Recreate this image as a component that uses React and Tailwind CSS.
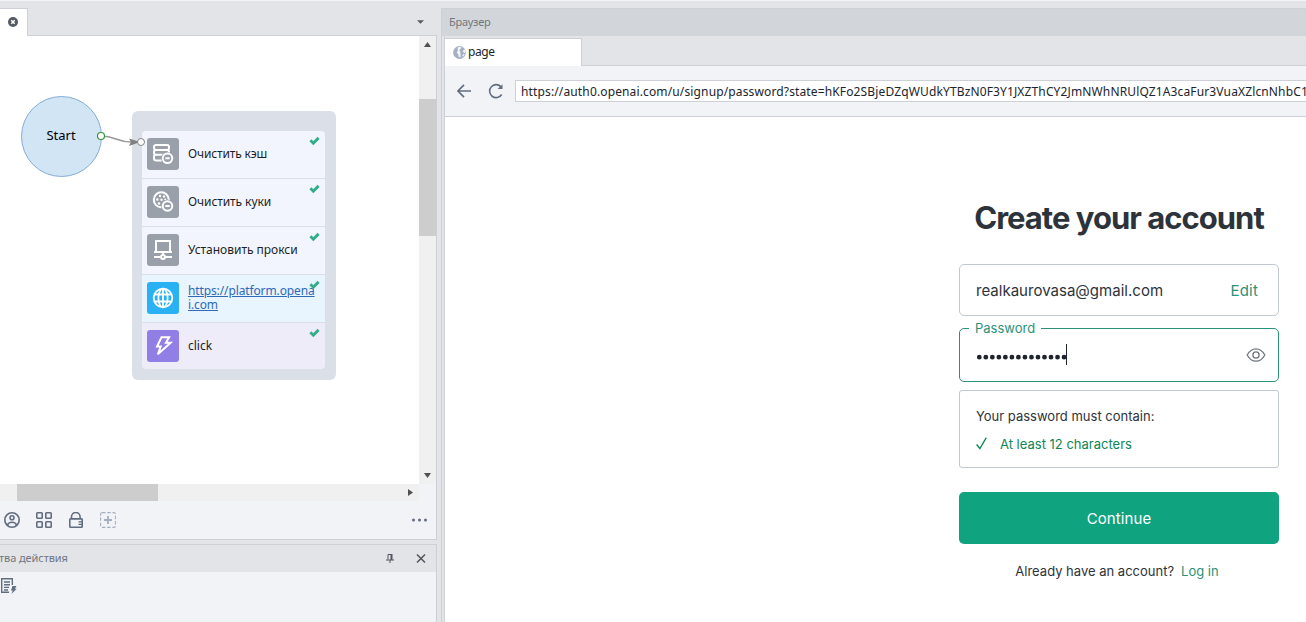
import React from "react";

const ui = "font-['Noto_Sans',sans-serif]";

function CacheIcon() {
  return (
    <svg width="32" height="32" viewBox="0 0 32 32" fill="none" stroke="#fff" strokeWidth="2">
      <path d="M15 22.500H9a2 2 0 0 1-2-2v-1.700a2 2 0 0 1 2-2h12M7 9a2 2 0 0 1 2-2h11a2 2 0 0 1 2 2v1a2 2 0 0 1-2 2H9a2 2 0 0 1-2-2zM9 12a2 2 0 0 0-2 2v.8a2 2 0 0 0 2 2h11a2 2 0 0 0 2-2V14a2 2 0 0 0-2-2" />
      <circle cx="20.500" cy="20.300" r="6.400" fill="#9aa0aa" stroke="none" />
      <circle cx="20.500" cy="20.300" r="4.800" />
      <path d="M18.300 20.300h4.400" />
    </svg>
  );
}

function CookieIcon() {
  return (
    <svg width="32" height="32" viewBox="0 0 32 32" fill="none" stroke="#fff" strokeWidth="2">
      <circle cx="14.300" cy="13.800" r="7.500" />
      <g fill="#fff" stroke="none">
        <circle cx="13" cy="10" r="1.200" /><circle cx="17" cy="10.500" r="1.200" />
        <circle cx="10.300" cy="13.500" r="1.200" /><circle cx="14.500" cy="13.800" r="1.200" />
        <circle cx="12" cy="17.500" r="1.200" /><circle cx="18.300" cy="13.500" r="1.100" />
      </g>
      <circle cx="20.500" cy="20" r="6.400" fill="#9aa0aa" stroke="none" />
      <circle cx="20.500" cy="20" r="4.800" />
      <path d="M18.300 20h4.400" />
    </svg>
  );
}

function ProxyIcon() {
  return (
    <svg width="32" height="32" viewBox="0 0 32 32" fill="none" stroke="#fff" strokeWidth="2">
      <path d="M9 17.500V7h14v10.500M7 18h18M16 18v3M7 23h6M19 23h6" />
      <circle cx="16" cy="23" r="2" fill="#9aa0aa" />
    </svg>
  );
}

function GlobeIcon() {
  return (
    <svg width="32" height="32" viewBox="0 0 32 32" fill="none" stroke="#fff" strokeWidth="1.8">
      <circle cx="16" cy="16" r="9.300" />
      <ellipse cx="16" cy="16" rx="4.600" ry="9.300" />
      <path d="M16 6.700v18.600M8 12.500h16M8 19.500h16" />
    </svg>
  );
}

function BoltIcon() {
  return (
    <svg width="32" height="32" viewBox="0 0 32 32" fill="none" stroke="#fff" strokeWidth="2">
      <path d="M14.500 7.200h7.600l-3.200 5.600h4.700L10.800 24.300l2.900-7.800H10z" />
    </svg>
  );
}

function Done() {
  return (
    <svg className="absolute right-[5.500px] top-[5px]" width="11" height="10" viewBox="0 0 11 10" fill="none" stroke="#34ad88" strokeWidth="2.900">
      <path d="M1.400 4.300l2.900 2.900L9.600 1.900" />
    </svg>
  );
}

function Step({ icon, tile, bg, last, children }) {
  return (
    <div className={"relative flex items-center pl-[5px] " + bg + (last ? " h-[46px]" : " h-12 border-b border-[#d9dee7] pb-px")}>
      <div className={"size-8 shrink-0 rounded-[3px] " + tile}>{icon}</div>
      <div className="ml-[9px] w-32 text-[12px] leading-[14px]">{children}</div>
      <Done />
    </div>
  );
}

function Flow() {
  return (
    <div className="relative h-[448px] w-[419px] overflow-hidden bg-white text-[#1c1f26]">
      <div className="absolute left-[21px] top-[60px] flex size-[81px] items-center justify-center rounded-full border border-[#85acd6] bg-[#d1e5f4] pb-px pr-px text-[13px] text-black">
        Start
      </div>
      <div className="absolute left-[132px] top-[75px] h-[269px] w-[204px] rounded-md bg-[#dbe0e8] px-2.5 pt-5">
        <div className="w-[183px] overflow-hidden rounded-[4px]">
          <Step icon={<CacheIcon />} tile="bg-[#9aa0aa]" bg="bg-[#f2f5fd]"><span className="tracking-[-0.15px]">Очистить кэш</span></Step>
          <Step icon={<CookieIcon />} tile="bg-[#9aa0aa]" bg="bg-[#f2f5fd]"><span className="tracking-[-0.08px]">Очистить куки</span></Step>
          <Step icon={<ProxyIcon />} tile="bg-[#9aa0aa]" bg="bg-[#f2f5fd]"><span className="tracking-[-0.02px]">Установить прокси</span></Step>
          <Step icon={<GlobeIcon />} tile="bg-[#29b1f3]" bg="bg-[#e8f4fe]">
            <span className="tracking-[-0.12px] text-[#3069b8] underline">https://platform.opena<br />i.com</span>
          </Step>
          <Step icon={<BoltIcon />} tile="bg-[#917fe5]" bg="bg-[#efecfa]" last>click</Step>
        </div>
      </div>
      <svg className="absolute left-[95px] top-[94px]" width="52" height="20" viewBox="0 0 52 20" fill="none">
        <path d="M6 6C21 6 21 12 37 12" stroke="#999" strokeWidth="1.500" />
        <path d="M34 8.500L45 12l-11 4 2-4z" fill="#7f7f7f" />
        <circle cx="6" cy="6" r="3.500" fill="#fff" stroke="#389338" strokeWidth="1.200" />
        <circle cx="46" cy="12" r="3.500" fill="#fff" stroke="#858585" />
      </svg>
    </div>
  );
}

function LeftToolbar() {
  return (
    <div className="flex h-[38px] items-center bg-[#f2f3f7] pl-1 text-[#626d80]">
      <svg width="16" height="16" viewBox="0 0 16 16" fill="none" stroke="currentColor" strokeWidth="1.600">
        <circle cx="8" cy="8" r="7.200" /><circle cx="8" cy="5.800" r="2" />
        <path d="M3.400 13.200c.7-2.200 2.400-3 4.600-3s3.900.8 4.600 3" />
      </svg>
      <svg className="ml-4" width="16" height="16" viewBox="0 0 16 16" fill="none" stroke="currentColor" strokeWidth="1.600">
        <rect x=".8" y=".8" width="5.400" height="5.400" rx=".7" /><rect x="9.800" y=".8" width="5.400" height="5.400" rx=".7" />
        <rect x=".8" y="9.800" width="5.400" height="5.400" rx=".7" /><rect x="9.800" y="9.800" width="5.400" height="5.400" rx=".7" />
      </svg>
      <svg className="ml-4" width="16" height="16" viewBox="0 0 16 16" fill="none" stroke="currentColor" strokeWidth="1.600">
        <path d="M3.500 7V4.800a4.300 4.300 0 0 1 8.600 0V7" /><rect x="1.800" y="6.900" width="12.400" height="8.300" rx=".7" />
        <path d="M10.500 9.800H15M10.500 12.400H15" strokeWidth="1.200" />
      </svg>
      <svg className="ml-4" width="16" height="16" viewBox="0 0 16 16" fill="none" stroke="#a4aebf">
        <rect x=".6" y=".6" width="14.800" height="14.800" rx="1.500" strokeWidth="1.100" strokeDasharray="3.400 1.800" />
        <path d="M8 4v8M4 8h8" strokeWidth="1.800" />
      </svg>
      <svg className="ml-auto mr-[9px]" width="15" height="4" viewBox="0 0 15 4" fill="currentColor">
        <circle cx="1.500" cy="2" r="1.500" /><circle cx="7.500" cy="2" r="1.500" /><circle cx="13.500" cy="2" r="1.500" />
      </svg>
    </div>
  );
}

function LeftPane() {
  return (
    <div className="flex w-[437px] shrink-0 flex-col">
      <div className="flex h-7">
        <div className="flex w-7 items-center justify-start border-r border-t border-[#cdd0d7] bg-white pb-px pl-2">
          <svg width="10" height="10" viewBox="0 0 10 10">
            <circle cx="5" cy="5" r="5" fill="#555b66" />
            <path d="M3.300 3.300l3.400 3.400M6.700 3.300L3.300 6.700" stroke="#fff" strokeWidth="1.500" />
          </svg>
        </div>
        <div className="flex flex-1 items-center justify-end border-b border-[#cdd0d7] pr-[13px]">
          <svg width="7" height="4" viewBox="0 0 7 4"><path d="M0 .3h7L3.500 3.800z" fill="#555b66" /></svg>
        </div>
      </div>
      <div className="flex flex-col border-b border-r border-[#cdd0d7] bg-[#f2f3f7]">
        <div className="flex">
          <Flow />
          <div className="flex w-[17px] flex-col items-center bg-[#f0f0f0]">
            <svg className="mt-1.5" width="7" height="5" viewBox="0 0 7 5"><path d="M0 5h7L3.500 0z" fill="#505050" /></svg>
            <div className="mt-[52px] h-[137px] w-full bg-[#cdcdcd]" />
            <svg className="mb-[6px] mt-auto" width="7" height="5" viewBox="0 0 7 5"><path d="M0 0h7L3.500 5z" fill="#505050" /></svg>
          </div>
        </div>
        <div className="flex h-[17px] w-[419px] items-center bg-[#f0f0f0] pl-[17px]">
          <div className="h-full w-[141px] bg-[#cdcdcd]" />
          <svg className="ml-auto mr-1.5" width="5" height="7" viewBox="0 0 5 7"><path d="M0 0v7l5-3.500z" fill="#505050" /></svg>
        </div>
        <LeftToolbar />
      </div>
      <div className="mt-1 flex flex-1 flex-col border-r border-t border-[#cdd0d7] bg-[#f2f3f7]">
        <div className="flex h-[27px] items-center bg-[#e3e4e8] text-[11px] text-[#71767e]">
          <span className="-ml-px whitespace-nowrap tracking-[-0.08px]">тва действия</span>
          <svg className="ml-auto" width="8" height="9" viewBox="0 0 8 9" fill="none" stroke="#50565f">
            <path d="M2 5.500v-5h3.500v5M0 6h8M4 6v3" /><path d="M5.500 0v6" strokeWidth="2" />
          </svg>
          <svg className="ml-[22px] mr-2.5" width="10" height="9" viewBox="0 0 10 9" fill="none" stroke="#50565f" strokeWidth="1.500">
            <path d="M1 .5l8 8M9 .5l-8 8" />
          </svg>
        </div>
        <svg className="mt-1.5" width="17" height="16" viewBox="0 0 17 16" fill="none" stroke="#626d80" strokeWidth="1.400">
          <path d="M12.300 7V.7H1.700v13.600H9M4 4h6M4 6.700h6M4 9.400h5M4 12h4" />
          <path d="M12.500 8h4l-1.600 2.800h1.800L11.500 16l1.200-3.600H11z" fill="#626d80" stroke="none" />
        </svg>
      </div>
    </div>
  );
}

function BrowserBar() {
  return (
    <div className="flex h-[51px] shrink-0 items-center border-b border-[#cdd0d7] bg-[#f2f3f7] pl-3">
      <svg width="14" height="14" viewBox="0 0 14 14" fill="none" stroke="#626d80" strokeWidth="1.700">
        <path d="M14 7H1M7 .8L.9 7 7 13.200" />
      </svg>
      <svg className="ml-[17px]" width="16" height="16" viewBox="0 0 16 16" fill="none" stroke="#626d80" strokeWidth="1.600">
        <path d="M13.700 11.500a6.500 6.500 0 1 1-.4-7.300" /><path d="M14.500 1.200v4.900H9.600z" fill="#626d80" stroke="none" />
      </svg>
      <div className="ml-[11px] flex h-[22px] flex-1 items-center overflow-hidden whitespace-nowrap border border-r-0 border-[#cdd0d7] bg-white pl-[5px] pt-0.5 text-[12px] text-[#20242c]">
        <span className="tracking-[0.136px]">https://auth0.openai.com/u/signup/password?state=hKFo2SBjeDZqWUdkYTBzN0F3Y1JXZThCY2JmNWhNRUlQZ1A3caFur3VuaXZlcnNhbC1s</span>
      </div>
    </div>
  );
}

function SignUp() {
  return (
    <div className="flex-1 bg-white pl-[514px] font-['Inter','Liberation_Sans',sans-serif] text-[#2d333a]">
      <div className="flex w-80 flex-col">
        <h1 className="mt-[81px] whitespace-nowrap text-center text-[31px] font-bold leading-10 tracking-[-0.98px]">Create your account</h1>
        <div className="mt-[26px] flex h-[52px] items-center justify-between rounded-[5px] border border-[#c2c8d0] pl-4 pr-5 pt-0.5 text-[15px]">
          <span className="tracking-[0.02px]">realkaurovasa@gmail.com</span>
          <span className="tracking-[0.2px] text-[#2a9278]">Edit</span>
        </div>
        <div className="relative mt-3 flex h-[54px] items-center rounded-[5px] border border-[#2a9278] pl-4 pr-3">
          <span className="absolute -top-[11px] left-[9px] bg-white px-[6px] text-[13px] leading-5 text-[#2a9278]">Password</span>
          <svg width="92" height="22" viewBox="0 0 92 22" className="shrink-0">
            <path d="M3.300 13.200h86" stroke="#20242c" strokeWidth="4.800" strokeLinecap="round" strokeDasharray="0 6.520" />
            <path d="M90.500 0v21" stroke="#20242c" />
          </svg>
          <svg className="mb-px ml-auto" width="20" height="14" viewBox="0 0 20 14" fill="none" stroke="#6e7780" strokeWidth="1.300">
            <path d="M1.200 7C3.500 2.600 6.500.8 10 .8S16.500 2.600 18.800 7C16.500 11.400 13.500 13.200 10 13.200S3.500 11.400 1.200 7z" />
            <circle cx="10" cy="7" r="3.100" />
          </svg>
        </div>
        <div className="mt-2 h-[78px] rounded-[3px] border border-[#c2c8d0] pl-4 pt-[15px] text-[13px] leading-5">
          <p>Your password must contain:</p>
          <p className="mt-2 flex items-center text-[#0e8556]">
            <svg className="mb-px mr-[13px]" width="11" height="13" viewBox="0 0 11 13" fill="none" stroke="#0e8556" strokeWidth="1.300">
              <path d="M.6 7.500l3.300 4L10.300.600" />
            </svg>
            At least 12 characters
          </p>
        </div>
        <button className="mt-6 h-[52px] rounded-[5px] bg-[#10a37f] pt-0.5 text-[15px] tracking-[0.1px] text-white">Continue</button>
        <p className="mt-[17px] flex justify-center gap-[7px] whitespace-nowrap pr-1 text-[13px] leading-5">
          <span>Already have an account?</span><span className="text-[#2a9278]">Log in</span>
        </p>
      </div>
    </div>
  );
}

function BrowserPane() {
  return (
    <div className="ml-1 flex min-w-0 flex-1 flex-col border-l border-[#cdd0d7]">
      <div className="flex h-7 shrink-0 items-center border-t border-[#cdd0d7] bg-[#d2d6db] pl-[7px] text-[11px] text-[#71767e]">
        <span className="tracking-[-0.25px]">Браузер</span>
      </div>
      <div className="ml-0.5 flex min-h-0 flex-1 flex-col border-l border-[#cdd0d7]">
        <div className="flex h-[30px] shrink-0 pt-0.5">
          <div className="flex w-[137px] items-center border-r border-t border-[#cdd0d7] bg-white pb-px pl-2 text-[12px] text-[#1c1f26]">
            <svg width="13" height="13" viewBox="0 0 13 13">
              <circle cx="6.500" cy="6.500" r="6.400" fill="#a5b0c2" />
              <path d="M4.600 1.500L7.500.8l1.200 1-1.700 1.500-.7 1.500 1 1 .3 5L6 11.500 5.200 8.300 3.800 6.500l1-2zM9.700 4.800l2.500-1.600.5 3-1.700.8zM9.300 9l1.600-1 .8.8-1.800 2z" fill="#f3f5f8" />
            </svg>
            <span className="ml-0.5 tracking-[-0.42px]">page</span>
          </div>
          <div className="flex-1 border-b border-[#cdd0d7]" />
        </div>
        <BrowserBar />
        <SignUp />
      </div>
    </div>
  );
}

export default function App() {
  return (
    <div className={"flex h-[622px] w-[1306px] flex-col overflow-hidden bg-[#e3e4e8] " + ui}>
      <div className="h-px shrink-0 bg-[#f2f3f7]" />
      <div className="flex min-h-0 flex-1 pt-[7px]">
        <LeftPane />
        <BrowserPane />
      </div>
    </div>
  );
}
